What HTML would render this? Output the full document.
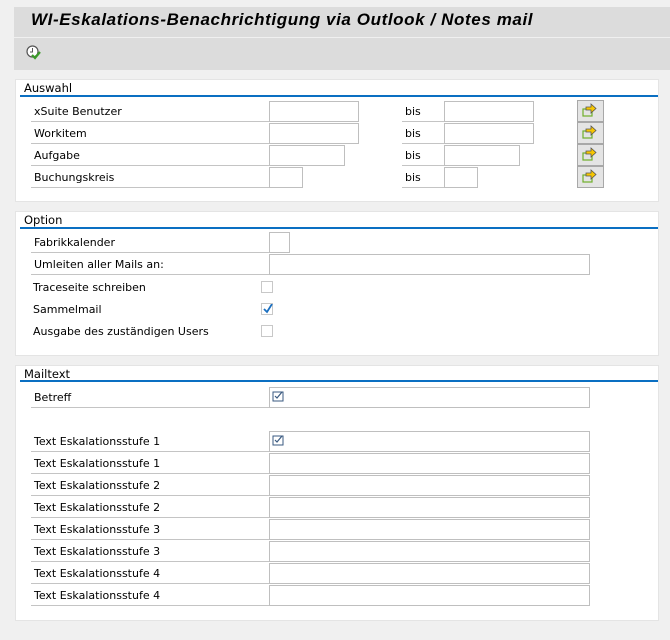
<html><head><style>
body{margin:0;width:670px;height:640px;background:#f0f0f0;position:relative;overflow:hidden;font-family:"DejaVu Sans","Liberation Sans",sans-serif;font-size:11px;color:#000}
div{position:absolute;box-sizing:border-box}
.title{left:14px;top:7px;width:656px;height:30px;background:#dcdcdc;font:bold italic 17px "Liberation Sans",sans-serif;padding:3px 0 0 17px;letter-spacing:0.6px}
.tb{left:14px;top:38px;width:656px;height:32px;background:#dcdcdc}
.p{left:15px;width:644px;background:#fff;border:1px solid #e4e4e4}
.h{left:8px;top:1px;font-size:11.5px}
.ln{left:4px;right:0;height:2px;background:#0a6fc2}
.l{height:21px;border-bottom:1px solid #c4c4c4;padding:4px 0 0 3px;white-space:nowrap}
.i{height:21px;border:1px solid #bfbfbf;background:#fff}
.cb{width:12px;height:12px;border:1px solid #c8c8c8;background:#fff}
.bt{width:27px;height:22px;border:1px solid #a8a8a8;background:#e4e4e4}
</style></head><body>
<div class="title">WI-Eskalations-Benachrichtigung via Outlook / Notes mail</div>
<div class="tb"><svg style="position:absolute;left:11px;top:6px" width="18" height="18" viewBox="0 0 18 18"><circle cx="7.5" cy="7.5" r="5.5" fill="#fff" stroke="#555" stroke-width="1.2"/><path d="M7.5 4v4h-2.5" stroke="#555" fill="none" stroke-width="1"/><path d="M7 11l3 3 5-6" stroke="#3a9a28" stroke-width="2.2" fill="none"/></svg></div>

<div class="p" style="top:79px;height:123px">
<div class="h">Auswahl</div><div class="ln" style="top:15px"></div>
</div>
<div class="l" style="left:31px;top:101px;width:238px">xSuite Benutzer</div><div class="i" style="left:269px;top:101px;width:90px"></div>
<div class="l" style="left:402px;top:101px;width:42px">bis</div><div class="i" style="left:444px;top:101px;width:90px"></div>
<div class="l" style="left:31px;top:123px;width:238px">Workitem</div><div class="i" style="left:269px;top:123px;width:90px"></div>
<div class="l" style="left:402px;top:123px;width:42px">bis</div><div class="i" style="left:444px;top:123px;width:90px"></div>
<div class="l" style="left:31px;top:145px;width:238px">Aufgabe</div><div class="i" style="left:269px;top:145px;width:76px"></div>
<div class="l" style="left:402px;top:145px;width:42px">bis</div><div class="i" style="left:444px;top:145px;width:76px"></div>
<div class="l" style="left:31px;top:167px;width:238px">Buchungskreis</div><div class="i" style="left:269px;top:167px;width:34px"></div>
<div class="l" style="left:402px;top:167px;width:42px">bis</div><div class="i" style="left:444px;top:167px;width:34px"></div>
<div class="bt" style="left:577px;top:100px"><svg width="25" height="20"><rect x="5" y="8" width="9" height="7" fill="none" stroke="#6fb02a" stroke-width="1.2"/><path d="M8 6h5v-3l5 4.5-5 4.5v-3h-5z" fill="#f7c600" stroke="#555" stroke-width="0.8"/></svg></div>
<div class="bt" style="left:577px;top:122px"><svg width="25" height="20"><rect x="5" y="8" width="9" height="7" fill="none" stroke="#6fb02a" stroke-width="1.2"/><path d="M8 6h5v-3l5 4.5-5 4.5v-3h-5z" fill="#f7c600" stroke="#555" stroke-width="0.8"/></svg></div>
<div class="bt" style="left:577px;top:144px"><svg width="25" height="20"><rect x="5" y="8" width="9" height="7" fill="none" stroke="#6fb02a" stroke-width="1.2"/><path d="M8 6h5v-3l5 4.5-5 4.5v-3h-5z" fill="#f7c600" stroke="#555" stroke-width="0.8"/></svg></div>
<div class="bt" style="left:577px;top:166px"><svg width="25" height="20"><rect x="5" y="8" width="9" height="7" fill="none" stroke="#6fb02a" stroke-width="1.2"/><path d="M8 6h5v-3l5 4.5-5 4.5v-3h-5z" fill="#f7c600" stroke="#555" stroke-width="0.8"/></svg></div>

<div class="p" style="top:211px;height:145px">
<div class="h">Option</div><div class="ln" style="top:15px"></div>
</div>
<div class="l" style="left:31px;top:232px;width:238px">Fabrikkalender</div><div class="i" style="left:269px;top:232px;width:21px"></div>
<div class="l" style="left:31px;top:254px;width:238px">Umleiten aller Mails an:</div><div class="i" style="left:269px;top:254px;width:321px"></div>
<div style="left:33px;top:281px">Traceseite schreiben</div><div class="cb" style="left:261px;top:281px"></div>
<div style="left:33px;top:303px">Sammelmail</div><div class="cb" style="left:261px;top:303px"><svg style="position:absolute;left:0;top:0" width="11" height="11"><path d="M2 5l3 3 5-8" stroke="#1a6fc0" stroke-width="1.8" fill="none"/></svg></div>
<div style="left:33px;top:325px">Ausgabe des zuständigen Users</div><div class="cb" style="left:261px;top:325px"></div>

<div class="p" style="top:365px;height:256px">
<div class="h">Mailtext</div><div class="ln" style="top:14px"></div>
</div>
<div class="l" style="left:31px;top:387px;width:238px">Betreff</div><div class="i" style="left:269px;top:387px;width:321px"><svg style="position:absolute;left:2px;top:3px" width="14" height="12"><rect x="1" y="1" width="10" height="9" fill="none" stroke="#3a5a80"/><path d="M3 5l2 2 5-6" stroke="#3a5a80" fill="none" stroke-width="1.2"/></svg></div>
<div class="l" style="left:31px;top:431px;width:238px">Text Eskalationsstufe 1</div><div class="i" style="left:269px;top:431px;width:321px"><svg style="position:absolute;left:2px;top:3px" width="14" height="12"><rect x="1" y="1" width="10" height="9" fill="none" stroke="#3a5a80"/><path d="M3 5l2 2 5-6" stroke="#3a5a80" fill="none" stroke-width="1.2"/></svg></div>
<div class="l" style="left:31px;top:453px;width:238px">Text Eskalationsstufe 1</div><div class="i" style="left:269px;top:453px;width:321px"></div>
<div class="l" style="left:31px;top:475px;width:238px">Text Eskalationsstufe 2</div><div class="i" style="left:269px;top:475px;width:321px"></div>
<div class="l" style="left:31px;top:497px;width:238px">Text Eskalationsstufe 2</div><div class="i" style="left:269px;top:497px;width:321px"></div>
<div class="l" style="left:31px;top:519px;width:238px">Text Eskalationsstufe 3</div><div class="i" style="left:269px;top:519px;width:321px"></div>
<div class="l" style="left:31px;top:541px;width:238px">Text Eskalationsstufe 3</div><div class="i" style="left:269px;top:541px;width:321px"></div>
<div class="l" style="left:31px;top:563px;width:238px">Text Eskalationsstufe 4</div><div class="i" style="left:269px;top:563px;width:321px"></div>
<div class="l" style="left:31px;top:585px;width:238px">Text Eskalationsstufe 4</div><div class="i" style="left:269px;top:585px;width:321px"></div>
</body></html>
